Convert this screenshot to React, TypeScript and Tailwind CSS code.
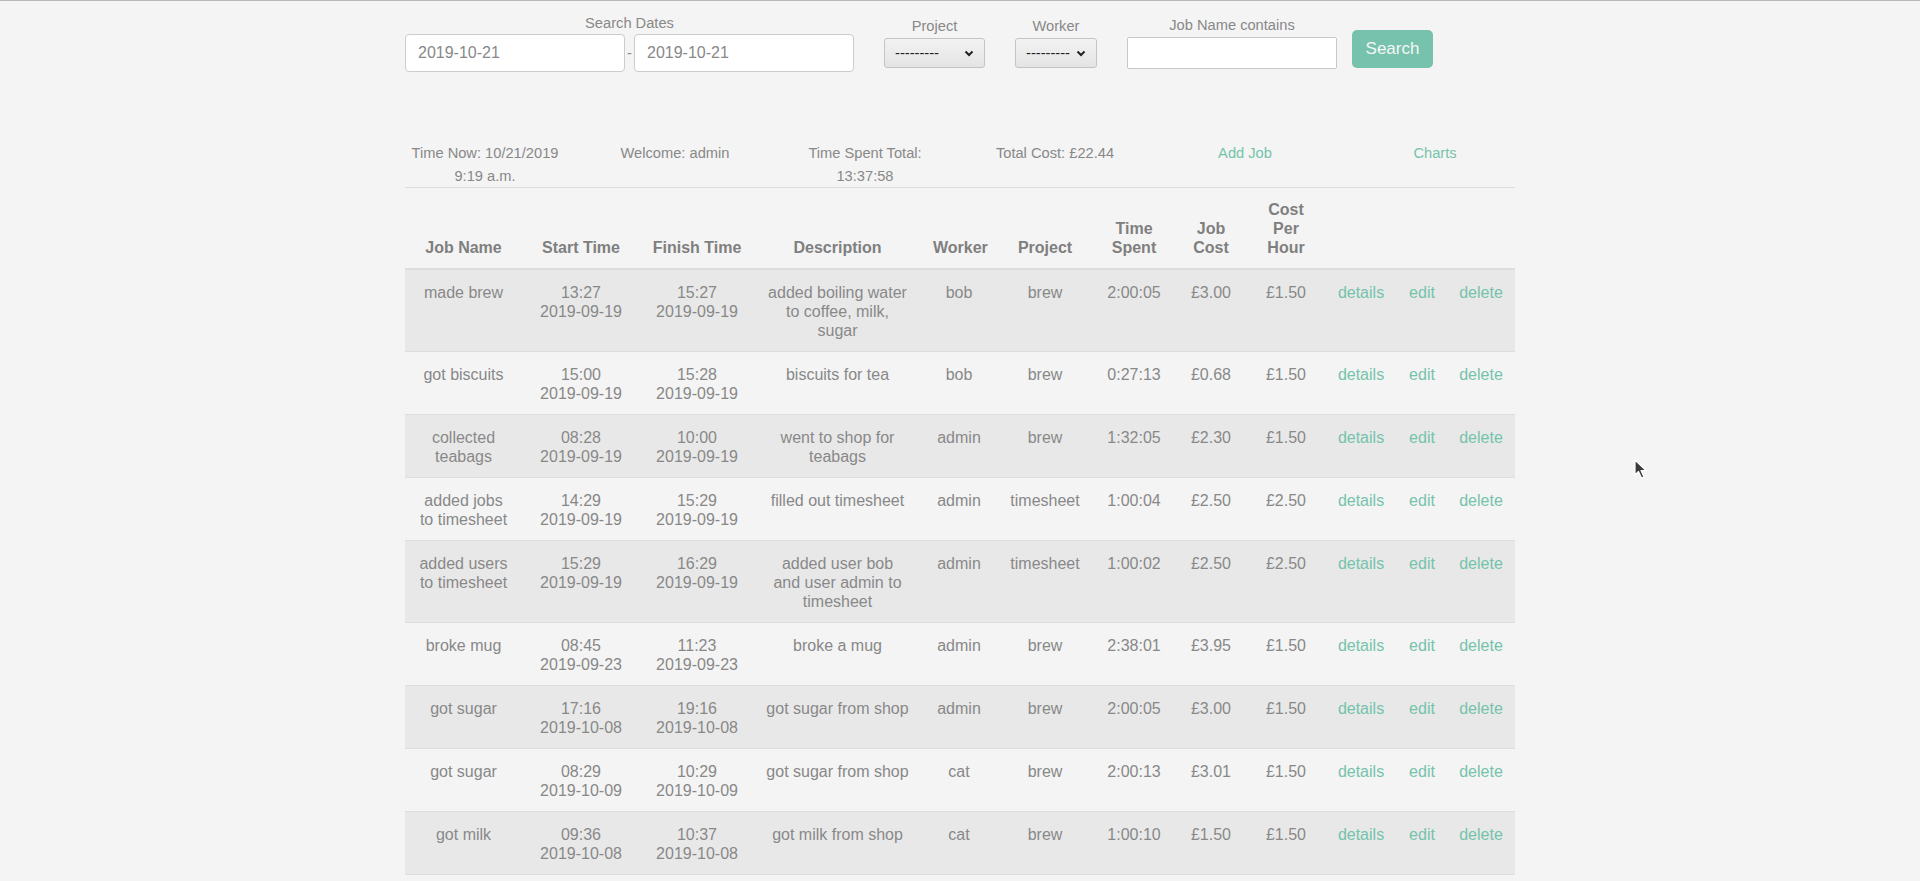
const jobs = [
  { name: 'made brew', start: ['13:27', '2019-09-19'], finish: ['15:27', '2019-09-19'], desc: ['added boiling water to coffee, milk, sugar'], worker: 'bob', project: 'brew', spent: '2:00:05', cost: '£3.00', rate: '£1.50' },
  { name: 'got biscuits', start: ['15:00', '2019-09-19'], finish: ['15:28', '2019-09-19'], desc: ['biscuits for tea'], worker: 'bob', project: 'brew', spent: '0:27:13', cost: '£0.68', rate: '£1.50' },
  { name: 'collected teabags', start: ['08:28', '2019-09-19'], finish: ['10:00', '2019-09-19'], desc: ['went to shop for teabags'], worker: 'admin', project: 'brew', spent: '1:32:05', cost: '£2.30', rate: '£1.50' },
  { name: 'added jobs to timesheet', start: ['14:29', '2019-09-19'], finish: ['15:29', '2019-09-19'], desc: ['filled out timesheet'], worker: 'admin', project: 'timesheet', spent: '1:00:04', cost: '£2.50', rate: '£2.50' },
  { name: 'added users to timesheet', start: ['15:29', '2019-09-19'], finish: ['16:29', '2019-09-19'], desc: ['added user bob', 'and user admin to', 'timesheet'], worker: 'admin', project: 'timesheet', spent: '1:00:02', cost: '£2.50', rate: '£2.50' },
  { name: 'broke mug', start: ['08:45', '2019-09-23'], finish: ['11:23', '2019-09-23'], desc: ['broke a mug'], worker: 'admin', project: 'brew', spent: '2:38:01', cost: '£3.95', rate: '£1.50' },
  { name: 'got sugar', start: ['17:16', '2019-10-08'], finish: ['19:16', '2019-10-08'], desc: ['got sugar from shop'], worker: 'admin', project: 'brew', spent: '2:00:05', cost: '£3.00', rate: '£1.50' },
  { name: 'got sugar', start: ['08:29', '2019-10-09'], finish: ['10:29', '2019-10-09'], desc: ['got sugar from shop'], worker: 'cat', project: 'brew', spent: '2:00:13', cost: '£3.01', rate: '£1.50' },
  { name: 'got milk', start: ['09:36', '2019-10-08'], finish: ['10:37', '2019-10-08'], desc: ['got milk from shop'], worker: 'cat', project: 'brew', spent: '1:00:10', cost: '£1.50', rate: '£1.50' },
];

const Chevron = () => (
  <svg width="10" height="7" viewBox="0 0 10 7" fill="none">
    <path d="M1.5 1.5 L5 5 L8.5 1.5" stroke="#222" strokeWidth="2" />
  </svg>
);

const FakeSelect = ({ width }: { width: string }) => (
  <div className={`${width} h-[30px] mt-px flex items-center justify-between pl-[10px] pr-[10px] rounded-[3px] border border-[#c4c4c4] bg-linear-to-b from-[#f2f2f2] to-[#e4e4e4] text-[14.667px] text-[#222]`}>
    <span>---------</span>
    <Chevron />
  </div>
);

const th = 'align-bottom text-center font-bold px-3 pt-[12px] pb-[11px] border-t border-b-2 border-[#dddddd]';
const td = 'align-top text-center px-3 pt-[13px] pb-[11px] border-b border-[#dddddd]';

export default function App() {
  return (
    <div className="relative min-h-screen bg-[#f4f4f4] border-t border-[#b8b8b8] font-['Liberation_Sans',Arial,sans-serif] text-[#888888]">
      <div className="w-[1140px] mx-auto px-[15px]">
        {/* search form */}
        <div className="flex items-start">
          <div className="mt-[11px] w-[449px]">
            <div className="text-center text-[14.667px] leading-[22px]">Search Dates</div>
            <div className="flex items-center">
              <div className="w-[220px] h-[38px] flex items-center pl-[12px] bg-white border border-[#cccccc] rounded-[4px] text-[16px]">2019-10-21</div>
              <span className="flex-1 text-center text-[14.667px]">-</span>
              <div className="w-[220px] h-[38px] flex items-center pl-[12px] bg-white border border-[#cccccc] rounded-[4px] text-[16px]">2019-10-21</div>
            </div>
          </div>
          <div className="mt-[14px] ml-[30px]">
            <div className="text-center text-[14.667px] leading-[22px]">Project</div>
            <FakeSelect width="w-[101px]" />
          </div>
          <div className="mt-[14px] ml-[30px]">
            <div className="text-center text-[14.667px] leading-[22px]">Worker</div>
            <FakeSelect width="w-[82px]" />
          </div>
          <div className="mt-[13px] ml-[30px]">
            <div className="text-center text-[14.667px] leading-[22px]">Job Name contains</div>
            <div className="w-[210px] h-[32px] mt-px bg-white border border-[#c8c8c8] rounded-[2px]" />
          </div>
          <button className="mt-[29px] ml-[15px] w-[81px] h-[38px] rounded-[5px] bg-[#76c2ad] text-[17px] text-[#f6f6f6]">Search</button>
        </div>

        {/* summary */}
        <div className="grid grid-cols-6 -mx-[15px] mt-[70px] text-[14.667px] leading-[22.5px] text-center">
          <div className="px-[15px]">Time Now: 10/21/2019<br />9:19 a.m.</div>
          <div className="px-[15px]">Welcome: admin</div>
          <div className="px-[15px]">Time Spent Total:<br />13:37:58</div>
          <div className="px-[15px]">Total Cost: £22.44</div>
          <div className="px-[15px] text-[#74c3ab]">Add Job</div>
          <div className="px-[15px] text-[#74c3ab]">Charts</div>
        </div>

        {/* jobs table */}
        <table className="w-full table-fixed border-separate border-spacing-0 text-[16px] leading-[19px]">
          <colgroup>
            <col className="w-[117px]" />
            <col className="w-[118px]" />
            <col className="w-[114px]" />
            <col className="w-[167px]" />
            <col className="w-[76px]" />
            <col className="w-[96px]" />
            <col className="w-[82px]" />
            <col className="w-[72px]" />
            <col className="w-[78px]" />
            <col className="w-[72px]" />
            <col className="w-[50px]" />
            <col className="w-[68px]" />
          </colgroup>
          <thead className="text-[#7f7f7f]">
            <tr>
              <th className={th}>Job Name</th>
              <th className={th}>Start Time</th>
              <th className={th}>Finish Time</th>
              <th className={th}>Description</th>
              <th className={th}>Worker</th>
              <th className={th}>Project</th>
              <th className={th}>Time Spent</th>
              <th className={th}>Job Cost</th>
              <th className={th}>Cost Per Hour</th>
              <th className={th}></th>
              <th className={th}></th>
              <th className={th}></th>
            </tr>
          </thead>
          <tbody>
            {jobs.map((j, i) => (
              <tr key={i} className={i % 2 === 0 ? 'bg-[#e8e8e8]' : ''}>
                <td className={td}>{j.name}</td>
                <td className={td}>{j.start[0]}<br />{j.start[1]}</td>
                <td className={td}>{j.finish[0]}<br />{j.finish[1]}</td>
                <td className={td}>
                  {j.desc.map((line, k) => (
                    <div key={k}>{line}</div>
                  ))}
                </td>
                <td className={td}>{j.worker}</td>
                <td className={td}>{j.project}</td>
                <td className={td}>{j.spent}</td>
                <td className={td}>{j.cost}</td>
                <td className={td}>{j.rate}</td>
                <td className={`${td} text-[#74c3ab]`}>details</td>
                <td className={`${td} text-[#74c3ab]`}>edit</td>
                <td className={`${td} text-[#74c3ab]`}>delete</td>
              </tr>
            ))}
          </tbody>
        </table>
      </div>

      {/* mouse pointer */}
      <svg className="absolute left-[1634px] top-[458px]" width="14" height="22" viewBox="0 0 14 22">
        <path d="M1 1 L1 16 L4.5 12.5 L7.5 19 L10 18 L7 11.5 L12 11.5 Z" fill="#3a3a3a" stroke="#ffffff" strokeWidth="1.2" strokeLinejoin="round" />
      </svg>
    </div>
  );
}
